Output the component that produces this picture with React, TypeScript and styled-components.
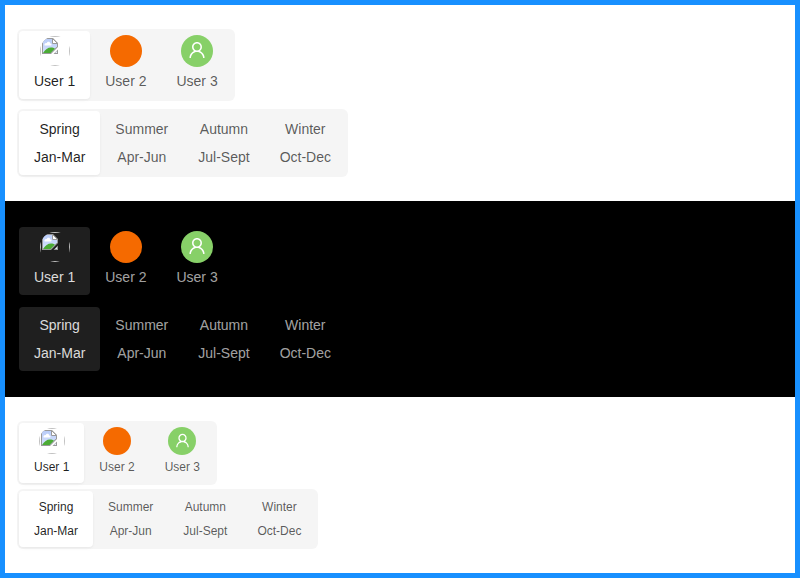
import React, { useId } from "react";
import styled, { createGlobalStyle, css } from "styled-components";

type Size = "middle" | "small";

const GlobalStyle = createGlobalStyle`
  *, *::before, *::after { box-sizing: border-box; }
  body {
    margin: 0;
    font-family: "Liberation Sans", Arial, sans-serif;
  }
`;

const Frame = styled.main`
  border: 5px solid #1890ff;
  height: 578px;
  overflow: hidden;
`;

const Section = styled.section<{ $dark?: boolean; $gap: number }>`
  --track: #f5f5f5;
  --thumb: #fff;
  --text: rgba(0, 0, 0, 0.65);
  --text-selected: rgba(0, 0, 0, 0.88);
  display: flex;
  flex-direction: column;
  align-items: flex-start;
  gap: ${(p) => p.$gap}px;
  padding: 24px 12px;
  background: #fff;
  ${(p) =>
    p.$dark &&
    css`
      --track: #000;
      --thumb: #1f1f1f;
      --text: rgba(255, 255, 255, 0.65);
      --text-selected: rgba(255, 255, 255, 0.85);
      background: #000;
    `}
`;

const Track = styled.div`
  display: flex;
  padding: 2px;
  border-radius: 6px;
  background: var(--track);
`;

const Item = styled.div<{ $selected: boolean; $size: Size }>`
  padding: 4px 15px;
  border-radius: 4px;
  text-align: center;
  white-space: nowrap;
  font-size: ${(p) => (p.$size === "small" ? 12 : 14)}px;
  line-height: ${(p) => (p.$size === "small" ? 24 : 28)}px;
  color: var(--text);
  ${(p) =>
    p.$selected &&
    css`
      color: var(--text-selected);
      background: var(--thumb);
      box-shadow: 0 1px 2px 0 rgba(0, 0, 0, 0.03),
        0 1px 6px -1px rgba(0, 0, 0, 0.02), 0 2px 4px 0 rgba(0, 0, 0, 0.02);
    `}
`;

const Avatar = styled.div<{ $size: Size; $color?: string }>`
  display: flex;
  align-items: center;
  justify-content: center;
  width: ${(p) => (p.$size === "small" ? 28 : 32)}px;
  height: ${(p) => (p.$size === "small" ? 28 : 32)}px;
  margin: 0 auto;
  border: ${(p) => (p.$color ? "0" : "1px solid transparent")};
  border-radius: 50%;
  overflow: hidden;
  color: #fff;
  background: ${(p) => p.$color ?? "transparent"};
`;

const UserGlyph = styled.svg<{ $size: Size }>`
  width: ${(p) => (p.$size === "small" ? 15 : 18)}px;
  height: ${(p) => (p.$size === "small" ? 15 : 18)}px;
  margin-bottom: ${(p) => (p.$size === "small" ? 1 : 2)}px;
  fill: currentColor;
`;

const MissingPicture = styled.div`
  display: flex;
  align-items: flex-start;
  width: 100%;
  height: 100%;
  padding: 1px;
  border: 1px solid silver;
`;

const PictureIcon = styled.svg`
  flex: none;
  width: 16px;
  height: 16px;
`;

function UserIcon({ size }: { size: Size }) {
  return (
    <UserGlyph $size={size} viewBox="64 64 896 896">
      <path d="M858.5 763.6a374 374 0 00-80.6-119.5 375.63 375.63 0 00-119.5-80.6c-.4-.2-.8-.3-1.2-.5C719.5 518 760 444.7 760 362c0-137-111-248-248-248S264 225 264 362c0 82.7 40.5 156 102.8 201.1-.4.2-.8.3-1.2.5-44.8 18.9-85 46-119.5 80.6a375.63 375.63 0 00-80.6 119.5A371.7 371.7 0 00136 901.8a8 8 0 008 8.2h60c4.4 0 7.9-3.5 8-7.8 2-77.2 33-149.5 87.8-204.3 56.7-56.7 132-87.9 212.2-87.9s155.5 31.2 212.2 87.9C779 752.7 810 825 812 902.2c.1 4.4 3.6 7.8 8 7.8h60a8 8 0 008-8.2c-1-47.8-10.9-94.3-29.5-138.2zM512 534c-45.9 0-89.1-17.9-121.6-50.4S340 407.9 340 362c0-45.9 17.9-89.1 50.4-121.6S466.1 190 512 190s89.1 17.9 121.6 50.4S684 316.1 684 362c0 45.9-17.9 89.1-50.4 121.6S557.9 534 512 534z" />
    </UserGlyph>
  );
}

function BrokenPicture() {
  const id = useId();
  return (
    <MissingPicture>
      <PictureIcon viewBox="0 0 16 16">
        <defs>
          <linearGradient id={id} x1="0" y1="0" x2="0" y2="1">
            <stop offset="0" stopColor="#b9ccf8" />
            <stop offset="1" stopColor="#d6e2fd" />
          </linearGradient>
        </defs>
        <path d="M0 0H11L16 5V9L9 16H0Z" fill="#999" />
        <path d="M1 1H11L15 5V8.6L8.6 15H1Z" fill={`url(#${id})`} />
        <path d="M2.5 7.5C2 5.6 4 4.8 4.8 5.2C5.3 3.2 8.2 3.6 8.2 5.4C9.8 5.3 10 7.5 8.8 7.5Z" fill="#fff" />
        <path d="M1 15C3 11.5 6 9.5 9 9.5C10.7 9.5 12 9.9 13 10.6L8.6 15Z" fill="#4bab35" />
        <path d="M10.5 0.5V5.5H15.5Z" fill="#fff" stroke="#999" />
        <path d="M16 11.5V16H11.5Z" fill="#999" />
        <path d="M15 13V15H13Z" fill="#e4ecfd" />
      </PictureIcon>
    </MissingPicture>
  );
}

const seasons = [
  ["Spring", "Jan-Mar"],
  ["Summer", "Apr-Jun"],
  ["Autumn", "Jul-Sept"],
  ["Winter", "Oct-Dec"],
];

function UserPicker({ size }: { size: Size }) {
  return (
    <Track>
      <Item $selected $size={size}>
        <Avatar $size={size}>
          <BrokenPicture />
        </Avatar>
        <div>User 1</div>
      </Item>
      <Item $selected={false} $size={size}>
        <Avatar $size={size} $color="#f56a00" />
        <div>User 2</div>
      </Item>
      <Item $selected={false} $size={size}>
        <Avatar $size={size} $color="#87d068">
          <UserIcon size={size} />
        </Avatar>
        <div>User 3</div>
      </Item>
    </Track>
  );
}

function SeasonPicker({ size }: { size: Size }) {
  return (
    <Track>
      {seasons.map(([name, months], i) => (
        <Item key={name} $selected={i === 0} $size={size}>
          <div>{name}</div>
          <div>{months}</div>
        </Item>
      ))}
    </Track>
  );
}

function Pickers({ dark, size = "middle" }: { dark?: boolean; size?: Size }) {
  return (
    <Section $dark={dark} $gap={size === "small" ? 4 : 8}>
      <UserPicker size={size} />
      <SeasonPicker size={size} />
    </Section>
  );
}

export default function App() {
  return (
    <>
      <GlobalStyle />
      <Frame>
        <Pickers />
        <Pickers dark />
        <Pickers size="small" />
      </Frame>
    </>
  );
}
